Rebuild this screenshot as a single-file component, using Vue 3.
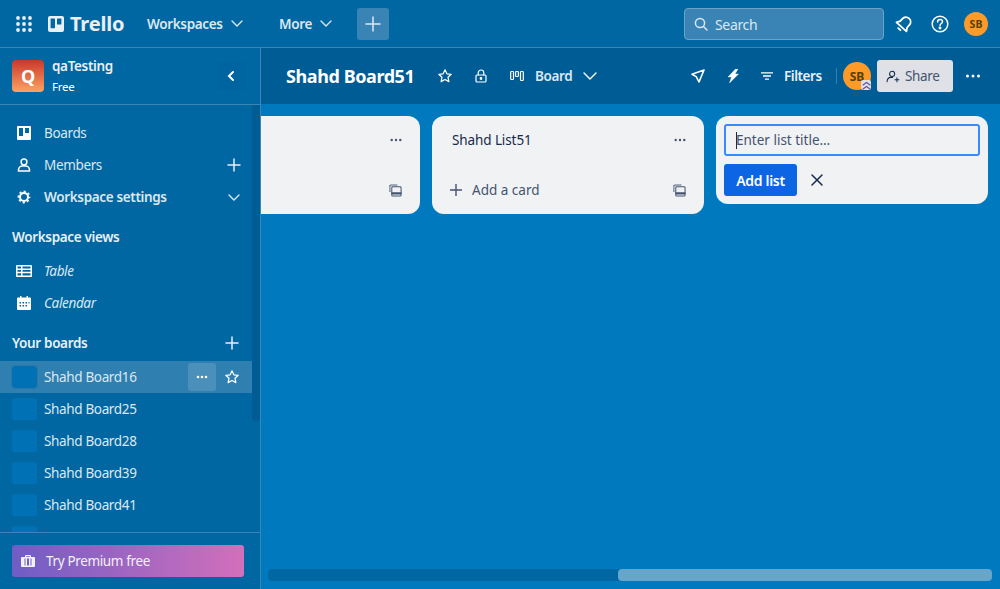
<script setup>
const boards = ['Shahd Board16', 'Shahd Board25', 'Shahd Board28', 'Shahd Board39', 'Shahd Board41', '']
</script>

<template>
  <div class="app">
    <header class="top">
      <svg class="grid" width="16" height="16" viewBox="0 0 16 16"><g v-for="y in [2,8,14]" :key="y"><circle v-for="x in [2,8,14]" :key="x" :cx="x" :cy="y" r="1.9" /></g></svg>
      <div class="logo">
        <svg width="16" height="16" viewBox="0 0 16 16"><rect width="16" height="16" rx="2" fill="currentColor" /><rect x="2.6" y="2.6" width="4.4" height="9.6" rx=".6" fill="#0067a3" /><rect x="9" y="2.6" width="4.4" height="6" rx=".6" fill="#0067a3" /></svg>
        <span>Trello</span>
      </div>
      <button class="menu w">Workspaces<svg class="chev" width="12" height="7" viewBox="0 0 12 7"><path d="M1 1l5 5 5-5" /></svg></button>
      <button class="menu m">More<svg class="chev" width="12" height="7" viewBox="0 0 12 7"><path d="M1 1l5 5 5-5" /></svg></button>
      <button class="create"><svg width="16" height="16" viewBox="0 0 16 16"><path d="M8 1v14M1 8h14" /></svg></button>
      <div class="search">
        <svg width="14" height="14" viewBox="0 0 14 14"><circle cx="6" cy="6" r="4.6" /><path d="M9.5 9.5L13 13" /></svg>
        <span>Search</span>
      </div>
      <svg class="ti bell" width="20" height="20" viewBox="0 0 20 20"><g transform="rotate(42 10 10)"><path d="M10 2.500c2.800 0 4.700 2 4.700 4.800v3.200l2 3.300H3.300l2-3.300V7.300c0-2.800 1.900-4.800 4.700-4.800z" stroke-width="1.800" stroke-linejoin="round" /><path d="M8.500 17h3" stroke-width="1.800" /></g></svg>
      <svg class="ti help" width="20" height="20" viewBox="0 0 20 20"><circle cx="10" cy="10" r="7.800" /><path d="M7.600 8c0-1.500 1.100-2.400 2.500-2.400s2.400.9 2.400 2.100c0 1.800-2.500 1.800-2.500 3.700" /><circle cx="10" cy="14" r=".7" fill="#fff" /></svg>
      <div class="avatar small">SB</div>
    </header>

    <div class="body">
      <aside class="side">
        <div class="workspace">
          <div class="q">Q</div>
          <div class="wsinfo"><strong>qaTesting</strong><small>Free</small></div>
          <button class="collapse"><svg width="8" height="12" viewBox="0 0 8 12"><path d="M6 2L2 6l4 4" /></svg></button>
        </div>
        <div class="navwrap">
          <nav class="nav">
            <a class="row first">
              <svg class="ni" width="14" height="14" viewBox="0 0 14 14"><path fill="currentColor" fill-rule="evenodd" d="M1 0h12a1 1 0 011 1v12a1 1 0 01-1 1H1a1 1 0 01-1-1V1a1 1 0 011-1zm1 2v8h4V2zm6 0v5h4V2z" /></svg>
              <span>Boards</span>
            </a>
            <a class="row">
              <svg class="ni stroke" width="14" height="14" viewBox="0 0 14 14"><circle cx="7" cy="4" r="2.900" /><path d="M1.500 13c-.4-3 1.500-5 3.500-5h4c2 0 3.900 2 3.500 5z" /></svg>
              <span>Members</span>
              <svg class="plus" width="14" height="14" viewBox="0 0 14 14"><path d="M7 1v12M1 7h12" /></svg>
            </a>
            <a class="row bold">
              <svg class="ni stroke gear" width="14" height="14" viewBox="0 0 14 14"><circle cx="7" cy="7" r="4" stroke-width="2" /><circle cx="7" cy="7" r="5.600" stroke-width="1.600" stroke-linecap="butt" stroke-dasharray="2.200 2.200" stroke-dashoffset="1.100" /></svg>
              <span>Workspace settings</span>
              <svg class="chev end" width="12" height="7" viewBox="0 0 12 7"><path d="M1 1l5 5 5-5" /></svg>
            </a>
            <h3 class="heading views">Workspace views</h3>
            <a class="row italic">
              <svg class="ni wide" width="16" height="12" viewBox="0 0 16 12"><path fill="currentColor" fill-rule="evenodd" d="M1 0h14a1 1 0 011 1v10a1 1 0 01-1 1H1a1 1 0 01-1-1V1a1 1 0 011-1zm.500 1.500v2h3.500v-2zm5 0v2h8v-2zm-5 3.500v1.700h3.500V5zm5 0v1.700h8V5zm-5 3.200v2.300h3.500V8.200zm5 0v2.300h8V8.200z" /></svg>
              <span>Table</span>
            </a>
            <a class="row italic">
              <svg class="ni" width="14" height="14" viewBox="0 0 14 14"><path fill="currentColor" fill-rule="evenodd" d="M3 0h1.500v1.500h5V0H11v1.500h2a1 1 0 011 1V13a1 1 0 01-1 1H1a1 1 0 01-1-1V2.500a1 1 0 011-1h2zM2.500 6v1.500H4V6zm3 0v1.500H7V6zm3 0v1.500H10V6zm3 0v1.500H12.500V6zm-9 3v1.500H4V9zm3 0v1.500H7V9zm3 0v1.500H10V9z" /></svg>
              <span>Calendar</span>
            </a>
            <div class="heading yours">
              <h3>Your boards</h3>
              <svg class="plus" width="14" height="14" viewBox="0 0 14 14"><path d="M7 1v12M1 7h12" /></svg>
            </div>
            <a v-for="(b, i) in boards" :key="i" class="board" :class="{ active: i === 0 }">
              <i class="thumb"></i>
              <span>{{ b }}</span>
              <template v-if="i === 0">
                <button class="more"><svg width="12" height="4" viewBox="0 0 12 4"><circle cx="2" cy="2" r="1.300" /><circle cx="6" cy="2" r="1.300" /><circle cx="10" cy="2" r="1.300" /></svg></button>
                <svg class="star" width="16" height="16" viewBox="0 0 16 16"><path d="M8 1.800l1.900 4 4.300.5-3.200 3 .9 4.300L8 11.500l-3.900 2.100.9-4.300-3.200-3 4.300-.5z" /></svg>
              </template>
            </a>
          </nav>
          <div class="sidebar-scroll"></div>
        </div>
        <div class="foot">
          <button class="premium">
            <svg width="14" height="12" viewBox="0 0 14 12"><path fill="currentColor" fill-rule="evenodd" d="M4 2V1a1 1 0 011-1h4a1 1 0 011 1v1h3a1 1 0 011 1v8a1 1 0 01-1 1H1a1 1 0 01-1-1V3a1 1 0 011-1zm1.200 0h3.600V1.200H5.200zM3.500 3.500v7h1v-7zm6 0v7h1v-7zM6 3.500v7h2v-7z" /></svg>
            <span>Try Premium free</span>
          </button>
        </div>
      </aside>

      <main class="main">
        <div class="bhead">
          <h1>Shahd Board51</h1>
          <svg class="hstar hi" width="16" height="16" viewBox="0 0 16 16"><path d="M8 1.800l1.900 4 4.300.5-3.200 3 .9 4.300L8 11.500l-3.900 2.100.9-4.300-3.200-3 4.300-.5z" /></svg>
          <svg class="hlock hi" width="12" height="14" viewBox="0 0 12 14"><path d="M3.200 6V3.800a2.800 2.800 0 015.600 0V6" /><rect x="1" y="6" width="10" height="7" rx="1" /><circle cx="6" cy="9.500" r=".8" fill="#fff" /></svg>
          <svg class="hboard hi" width="14" height="12" viewBox="0 0 14 12"><rect x=".7" y="1.500" width="2.800" height="8" rx=".8" /><rect x="5.600" y="1.500" width="2.800" height="5" rx=".8" /><rect x="10.500" y="1.500" width="2.800" height="9" rx=".8" /></svg>
          <span class="blabel">Board</span>
          <svg class="bchev chev" width="14" height="8" viewBox="0 0 14 8"><path d="M1 1l6 6 6-6" /></svg>
          <svg class="rocket hi" width="14" height="14" viewBox="0 0 14 14"><path d="M13 1L1 5.200l4.200 2.400L8 13z" stroke-linejoin="round" /></svg>
          <svg class="bolt" width="12" height="14" viewBox="0 0 12 14"><path d="M8.500 0L1 8h3.500L2.500 14l9-9H8L11 0z" /></svg>
          <svg class="filter hi" width="12" height="8" viewBox="0 0 12 8"><path d="M.5 .8h11M2.500 4h7M4.500 7.200h3" /></svg>
          <span class="flabel">Filters</span>
          <i class="sep"></i>
          <div class="avatar big">SB
            <span class="badge"><svg width="9" height="9" viewBox="0 0 9 9"><path d="M1 4l3.500-2.500L8 4M1 8l3.500-2.500L8 8" /></svg></span>
          </div>
          <button class="share">
            <svg width="14" height="13" viewBox="0 0 16 14"><circle cx="7" cy="4" r="2.900" /><path d="M1.200 13c.2-3 1.800-5 4.300-5h2M12.500 8.500v4.500M10.200 10.800h4.600" /></svg>
            Share
          </button>
          <svg class="hdots" width="16" height="4" viewBox="0 0 16 4"><circle cx="2.500" cy="2" r="1.500" /><circle cx="8" cy="2" r="1.500" /><circle cx="13.500" cy="2" r="1.500" /></svg>
        </div>

        <div class="canvas">
          <div class="lists">
            <section v-for="n in ['', 'Shahd List51']" :key="n" class="list">
              <div class="lhead">
                <span>{{ n }}</span>
                <svg width="12" height="4" viewBox="0 0 12 4"><circle cx="1.700" cy="2" r="1.200" /><circle cx="6" cy="2" r="1.200" /><circle cx="10.300" cy="2" r="1.200" /></svg>
              </div>
              <div class="lfoot">
                <template v-if="n">
                  <svg class="addi" width="12" height="12" viewBox="0 0 12 12"><path d="M6 0v12M0 6h12" /></svg>
                  <span>Add a card</span>
                </template>
                <svg class="tmpl" width="13" height="13" viewBox="0 0 14 14"><path d="M1 8V2a1 1 0 011-1h7" stroke-dasharray="1.500 1" /><rect x="3" y="3" width="10" height="10" rx="1" /><path d="M3.500 10h9" stroke-width="2.400" /></svg>
              </div>
            </section>
            <section class="list form">
              <div class="input"><i class="caret"></i><span>Enter list title…</span></div>
              <div class="actions">
                <button class="add">Add list</button>
                <svg width="12" height="12" viewBox="0 0 12 12"><path d="M1 1l10 10M11 1L1 11" /></svg>
              </div>
            </section>
          </div>
          <div class="hscroll"><div class="hthumb"></div></div>
        </div>
      </main>
    </div>
  </div>
</template>

<style>
html, body { margin: 0; overflow: hidden; }
</style>

<style scoped>
* { box-sizing: border-box; }
.app {
  width: 1000px; height: 589px; display: flex; flex-direction: column;
  font-family: "Noto Sans", "Open Sans", sans-serif; font-size: 13px; color: #fff;
  background: #0067a3; overflow: hidden; letter-spacing: -0.35px;
}
svg { flex: none; display: block; fill: none; stroke: currentColor; stroke-width: 1.500; stroke-linecap: round; }
button { font: inherit; letter-spacing: inherit; color: inherit; border: 0; background: none; padding: 0; }
h1, h3 { margin: 0; }

.top { height: 48px; flex: none; display: flex; align-items: center; border-bottom: 1px solid #3b86b5; color: #dbe7f0; }
.grid { margin-left: 16px; fill: #e8eff5; stroke: none; }
.logo { display: flex; align-items: center; margin-left: 16px; gap: 6px; font-size: 20px; font-weight: 700; letter-spacing: -0.2px; color: #e8eff5; width: 99px; }
.logo svg { stroke: none; }
.menu { display: flex; align-items: center; font-weight: 600; font-size: 13.500px; color: #dbe7f0; }
.w { width: 132px; gap: 8px; }
.m { width: 78px; gap: 8px; }
.chev { stroke-width: 1.400; }
.create { width: 32px; height: 32px; background: #3a84b5; border-radius: 3px; display: grid; place-items: center; }
.search { margin-left: 295px; width: 200px; height: 32px; display: flex; align-items: center; gap: 7px; padding-left: 9px; background: #3a84b5; border: 1px solid #6ba2c8; border-radius: 4px; font-size: 14px; }
.search span { padding-top: 1px; }
.ti { color: #fff; }
.bell { margin-left: 10px; }
.help { margin-left: 16px; }
.avatar { background: #fe9a28; color: #533f04; border-radius: 50%; display: grid; place-items: center; font-weight: 700; }
.small { width: 24px; height: 24px; font-size: 10.500px; margin-left: 14px; letter-spacing: 0; }

.body { flex: 1; display: flex; min-height: 0; }
.side { width: 261px; flex: none; display: flex; flex-direction: column; border-right: 1px solid #3b86b5; }
.workspace { height: 57px; flex: none; display: flex; align-items: center; padding-left: 12px; border-bottom: 1px solid #3b86b5; }
.q { width: 32px; height: 32px; border-radius: 4px; background: linear-gradient(#c9372c, #fea362); display: grid; place-items: center; font-weight: 700; font-size: 18px; }
.wsinfo { margin-left: 8px; width: 160px; display: flex; flex-direction: column; gap: 4px; line-height: 18px; }
.wsinfo strong { font-weight: 600; font-size: 13.500px; color: #e8eff5; }
.wsinfo small { font-size: 11.500px; line-height: 16px; letter-spacing: -0.2px; }
.collapse { width: 28px; height: 28px; background: #0064a0; border-radius: 3px; display: grid; place-items: center; margin-left: 5px; }
.collapse svg { stroke-width: 2; }

.navwrap { flex: 1; display: flex; min-height: 0; }
.nav { width: 252px; flex: none; overflow: hidden; padding-top: 12px; }
.sidebar-scroll { width: 8px; height: 316px; background: #005c94; border-radius: 0 0 4px 4px; }
.row, .board { height: 32px; display: flex; align-items: center; position: relative; color: #dbe7f0; font-size: 13.500px; }
.row { padding-left: 44px; }
.ni { position: absolute; left: 17px; color: #fff; }
.ni.wide { left: 16px; }
.row .ni:not(.stroke) { stroke: none; }
.gear { color: #fff; }
.plus { stroke-width: 1.500; margin-left: auto; color: #e8eff5; }
.row .plus { margin-right: 11px; }
.end { margin-left: auto; margin-right: 12px; color: #dbe7f0; }
.bold span { font-weight: 600; }
.italic span { font-style: italic; }
.heading { font-size: 13.500px; font-weight: 600; color: #e8eff5; padding-left: 12px; }
.views { height: 34px; line-height: 32px; margin-top: 8px; }
.yours { height: 26px; margin-top: 11px; margin-bottom: 5px; display: flex; align-items: center; padding-right: 13px; }
.yours h3 { font: inherit; }
.board { padding-left: 12px; gap: 7px; }
.active { background: #2f7fb0; }
.thumb { width: 25px; height: 22px; background: #0071b5; border-radius: 3px; }
.active .thumb { outline: 1px solid #2a77a8; }
.board span { flex: 1; }
.more { width: 28px; height: 28px; background: #4a90bb; border-radius: 3px; display: grid; place-items: center; }
.more svg { fill: #fff; stroke: none; }
.star { margin: 0 12px 0 1px; color: #fff; stroke-width: 1.200; stroke-linejoin: round; }

.foot { height: 57px; flex: none; border-top: 1px solid #3b86b5; padding: 12px 16px 0 12px; }
.premium { width: 232px; height: 32px; display: flex; align-items: center; gap: 11px; padding-left: 9px; border-radius: 3px; background: linear-gradient(90deg, #6e5dc6, #d36fbb); color: #f1f2f4; font-size: 13.500px; }
.premium svg { stroke: none; }

.main { flex: 1; min-width: 0; display: flex; flex-direction: column; background: #0079bf; }
.bhead { height: 56px; flex: none; display: flex; align-items: center; background: #005c94; position: relative; }
h1 { font-size: 18px; font-weight: 700; margin-left: 25px; width: 128px; white-space: nowrap; letter-spacing: -0.42px; line-height: 24px; }
.hi { color: #fff; stroke-width: 1.200; stroke-linejoin: round; }
.hstar { margin-left: 23px; }
.hlock { margin-left: 22px; }
.hboard { margin-left: 23px; }
.blabel { margin-left: 11px; font-weight: 600; font-size: 13.500px; color: #dbe7f0; width: 38px; }
.bchev { margin-left: 10px; }
.rocket { margin-left: 94px; stroke-width: 1.600; }
.bolt { margin-left: 22px; fill: #fff; stroke: #fff; stroke-width: 0.4; }
.filter { margin-left: 22px; stroke-width: 1.300; }
.flabel { margin-left: 11px; font-weight: 600; font-size: 13.500px; color: #e8eff5; width: 39px; letter-spacing: -0.45px; }
.sep { width: 1px; height: 16px; background: #3b7ca8; margin-left: 13px; }
.big { width: 28px; height: 28px; font-size: 12px; margin-left: 6px; position: relative; letter-spacing: 0; }
.badge { position: absolute; right: 0; bottom: 0; width: 10px; height: 10px; background: #dfe1e6; border-radius: 2px; display: grid; place-items: center; }
.badge svg { color: #5e4db2; stroke-width: 1.100; }
.share { margin-left: 6px; width: 76px; height: 32px; background: #dfe1e6; border-radius: 3px; color: #44546f; display: flex; align-items: center; padding-left: 9px; gap: 5px; font-size: 13.500px; }
.share svg { color: #172b4d; stroke-width: 1.200; }
.hdots { margin-left: 12px; fill: #fff; stroke: none; }

.canvas { flex: 1; min-height: 0; display: flex; flex-direction: column; }
.lists { flex: 1; min-height: 0; overflow: hidden; display: flex; align-items: flex-start; justify-content: flex-end; gap: 12px; padding: 12px 12px 0; }
.list { width: 272px; flex: none; background: #f1f2f4; border-radius: 12px; color: #44546f; }
.lhead { height: 48px; display: flex; align-items: center; justify-content: space-between; padding: 0 18px 0 20px; color: #172b4d; }
.lhead span { font-size: 13.500px; font-weight: 400; color: #172b4d; letter-spacing: -0.1px; }
.lhead svg { fill: #44546f; stroke: none; }
.lfoot { height: 50px; padding: 2px 18px 0 18px; display: flex; align-items: center; font-size: 13.500px; letter-spacing: 0; }
.addi { stroke-width: 1.400; margin-right: 10px; }
.tmpl { margin-left: auto; stroke-width: 1.100; }
.form { height: 88px; padding: 8px; }
.input { height: 32px; border: 2px solid #388bff; border-radius: 3px; display: flex; align-items: center; padding-left: 10px; font-size: 13.500px; letter-spacing: 0; }
.caret { width: 1px; height: 17px; background: #172b4d; margin-right: -1px; }
.actions { display: flex; align-items: center; margin-top: 8px; gap: 14px; color: #172b4d; }
.add { width: 73px; height: 32px; background: #0c66e4; color: #fff; border-radius: 3px; font-weight: 600; font-size: 14px; letter-spacing: -0.3px; }
.hscroll { height: 12px; flex: none; margin: 0 8px 8px 7px; background: #0067a3; border-radius: 4px; display: flex; justify-content: flex-end; }
.hthumb { width: 374px; background: #66a6cb; border-radius: 4px; }
</style>
